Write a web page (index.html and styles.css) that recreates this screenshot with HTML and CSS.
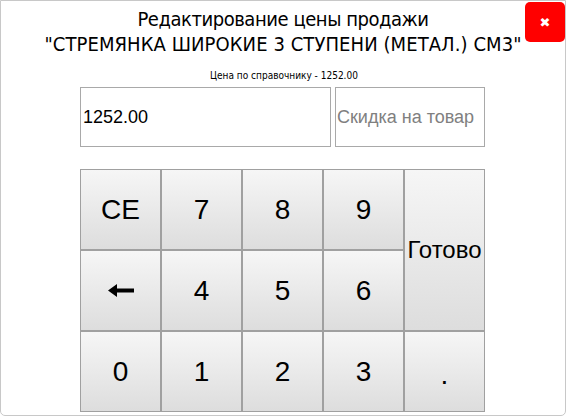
FILE: index.html
```html
<!DOCTYPE html>
<html lang="ru">
<head>
<meta charset="utf-8">
<title>Редактирование цены продажи</title>
<link rel="stylesheet" href="styles.css">
</head>
<body>
<div class="dialog">
  <div class="title"><span class="line1">Редактирование цены продажи</span><br><span class="line2">"СТРЕМЯНКА ШИРОКИЕ 3 СТУПЕНИ (МЕТАЛ.) СМ3"</span></div>
  <button class="close" type="button">&#x2716;</button>
  <div class="hint">Цена по справочнику - 1252.00</div>
  <div class="inputs">
    <input class="price" type="text" value="1252.00">
    <input class="discount" type="text" placeholder="Скидка на товар">
  </div>
  <div class="pad">
    <button class="key">CE</button>
    <button class="key">7</button>
    <button class="key">8</button>
    <button class="key">9</button>
    <button class="key done">Готово</button>
    <button class="key"><svg class="arrow" width="26" height="13" viewBox="0 0 26 13"><path d="M0 6.5 L9 0 L9 4.5 L26 4.5 L26 8.5 L9 8.5 L9 13 Z" fill="#000"/></svg></button>
    <button class="key">4</button>
    <button class="key">5</button>
    <button class="key">6</button>
    <button class="key">0</button>
    <button class="key">1</button>
    <button class="key">2</button>
    <button class="key">3</button>
    <button class="key dot">.</button>
  </div>
</div>
</body>
</html>
```
FILE: styles.css
```css
html, body {
  margin: 0;
  padding: 0;
  background: #ffffff;
}
.dialog {
  position: relative;
  box-sizing: border-box;
  width: 566px;
  height: 416px;
  border: 1px solid #c8c8c8;
  border-radius: 0 0 5px 5px;
  background: #fff;
}
.title {
  font-family: "DejaVu Sans Condensed", "DejaVu Sans", sans-serif;
  font-stretch: condensed;
  font-size: 20px;
  line-height: 25px;
  text-align: center;
  color: #000;
  padding-top: 6px;
}
.line1 {
  letter-spacing: -0.45px;
}
.line2 {
  letter-spacing: 0.08px;
}
.close {
  position: absolute;
  top: 1px;
  right: 0px;
  width: 40px;
  height: 40px;
  border: none;
  border-radius: 5px;
  background: #ff0000;
  color: #fff;
  font-size: 13px;
  font-weight: bold;
  font-family: "DejaVu Sans", sans-serif;
  padding: 0;
}
.hint {
  font-family: "DejaVu Sans Condensed", "DejaVu Sans", sans-serif;
  font-stretch: condensed;
  font-size: 10px;
  line-height: 12px;
  text-align: center;
  margin-top: 13px;
  margin-left: 2px;
}
.inputs {
  display: flex;
  gap: 4px;
  margin-left: 79px;
  margin-top: 5px;
}
.inputs input {
  box-sizing: border-box;
  height: 60px;
  border: 1px solid #a9a9a9;
  font-family: "Liberation Sans", Arial, sans-serif;
  font-size: 18px;
  color: #000;
  outline: none;
  margin: 0;
  background: #fff;
}
.price {
  width: 251px;
  padding: 0 2px;
}
.discount {
  width: 150px;
  padding: 0 1px;
}
.discount::placeholder {
  color: #808080;
}
.pad {
  display: grid;
  grid-template-columns: repeat(5, 81px);
  grid-template-rows: repeat(3, 81px);
  margin-left: 79px;
  margin-top: 22px;
  width: 405px;
}
.key {
  box-sizing: border-box;
  margin: 0;
  padding: 0;
  border: 1px solid #a0a0a0;
  background: linear-gradient(#f6f6f6, #dddddd);
  font-family: "Liberation Sans", Arial, sans-serif;
  font-size: 28px;
  color: #000;
  display: flex;
  align-items: center;
  justify-content: center;
}
.done {
  grid-column: 5;
  grid-row: 1 / span 2;
  font-size: 24px;
}
.dot {
  align-items: flex-end;
  padding-bottom: 20px;
}
.arrow {
  display: block;
}
```
